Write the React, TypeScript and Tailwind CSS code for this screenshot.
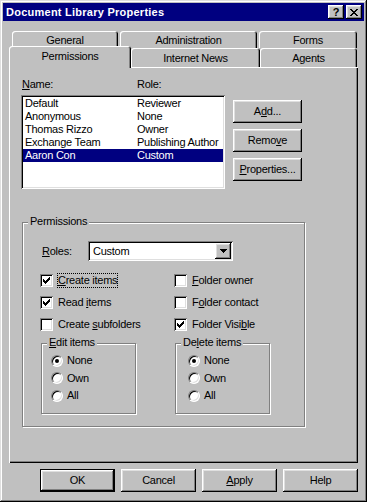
import React from "react";

function U({ children }: { children: React.ReactNode }) {
  return <span className="underline underline-offset-[1px]">{children}</span>;
}

function Btn({ children, className = "" }: { children: React.ReactNode; className?: string }) {
  return (
    <div
      className={`flex items-center justify-center bg-[#c0c0c0] shadow-[inset_-1px_-1px_#000,inset_1px_1px_#fff,inset_-2px_-2px_#808080,inset_2px_2px_#dfdfdf] ${className}`}
    >
      {children}
    </div>
  );
}

function Check({ checked }: { checked?: boolean }) {
  return (
    <span className="w-[13px] h-[13px] shrink-0 bg-white flex items-center justify-center shadow-[inset_1px_1px_#808080,inset_-1px_-1px_#fff,inset_2px_2px_#000,inset_-2px_-2px_#dfdfdf]">
      {checked && (
        <svg width="7" height="7" viewBox="0 0 7 7" shapeRendering="crispEdges">
          <rect x="0" y="2" width="1" height="3" fill="#000" />
          <rect x="1" y="3" width="1" height="3" fill="#000" />
          <rect x="2" y="4" width="1" height="3" fill="#000" />
          <rect x="3" y="3" width="1" height="3" fill="#000" />
          <rect x="4" y="2" width="1" height="3" fill="#000" />
          <rect x="5" y="1" width="1" height="3" fill="#000" />
          <rect x="6" y="0" width="1" height="3" fill="#000" />
        </svg>
      )}
    </span>
  );
}

function Radio({ on }: { on?: boolean }) {
  return (
    <span className="w-[12px] h-[12px] shrink-0 rounded-full bg-white flex items-center justify-center border border-t-[#808080] border-l-[#808080] border-b-white border-r-white shadow-[inset_1px_1px_#000,inset_-1px_-1px_#dfdfdf]">
      {on && <span className="w-[4px] h-[4px] rounded-full bg-black" />}
    </span>
  );
}

function CheckRow({
  checked,
  children,
  focus,
}: {
  checked?: boolean;
  children: React.ReactNode;
  focus?: boolean;
}) {
  return (
    <div className="flex items-center h-[13px]">
      <Check checked={checked} />
      <span
        className={`ml-[5px] whitespace-nowrap ${
          focus ? "outline outline-1 outline-dotted outline-black" : ""
        }`}
      >
        {children}
      </span>
    </div>
  );
}

function RadioGroup({
  label,
  pad,
  className = "",
}: {
  label: React.ReactNode;
  pad: string;
  className?: string;
}) {
  return (
    <div
      className={`relative w-[95px] h-[71px] border border-[#808080] shadow-[inset_1px_1px_#fff,1px_1px_#fff] ${className}`}
    >
      <span className="absolute -top-[8px] left-[5px] px-[2px] bg-[#c0c0c0] leading-[13px] whitespace-nowrap">
        {label}
      </span>
      <div className={`flex flex-col gap-[4.5px] mt-[10px] ${pad}`}>
        <div className="flex items-center h-[13px] gap-[4px]">
          <Radio on />
          <span>None</span>
        </div>
        <div className="flex items-center h-[13px] gap-[4px]">
          <Radio />
          <span>Own</span>
        </div>
        <div className="flex items-center h-[13px] gap-[4px]">
          <Radio />
          <span>All</span>
        </div>
      </div>
    </div>
  );
}

const users = [
  ["Default", "Reviewer"],
  ["Anonymous", "None"],
  ["Thomas Rizzo", "Owner"],
  ["Exchange Team", "Publishing Author"],
  ["Aaron Con", "Custom"],
];

export default function App() {
  return (
    <div className="w-[367px] h-[502px] bg-[#c0c0c0] p-[3px] flex flex-col font-['Liberation_Sans',Arial,sans-serif] text-[11px] leading-[13px] text-black tracking-[-0.25px] shadow-[inset_-1px_-1px_#000,inset_1px_1px_#dfdfdf,inset_-2px_-2px_#808080,inset_2px_2px_#fff] select-none">
      {/* Title bar */}
      <div className="h-[18px] shrink-0 bg-[#000080] flex items-center pl-[3px] pr-[2px]">
        <span className="flex-1 text-white font-bold tracking-[0.25px] whitespace-nowrap">
          Document Library Properties
        </span>
        <Btn className="w-[16px] h-[14px]">
          <span className="font-bold text-[11px] leading-none tracking-normal">?</span>
        </Btn>
        <Btn className="w-[16px] h-[14px] ml-[2px]">
          <svg width="8" height="7" viewBox="0 0 8 7" shapeRendering="crispEdges">
            <rect x="0" y="0" width="2" height="1" fill="#000" />
            <rect x="6" y="0" width="2" height="1" fill="#000" />
            <rect x="1" y="1" width="2" height="1" fill="#000" />
            <rect x="5" y="1" width="2" height="1" fill="#000" />
            <rect x="2" y="2" width="4" height="1" fill="#000" />
            <rect x="3" y="3" width="2" height="1" fill="#000" />
            <rect x="2" y="4" width="4" height="1" fill="#000" />
            <rect x="1" y="5" width="2" height="1" fill="#000" />
            <rect x="5" y="5" width="2" height="1" fill="#000" />
            <rect x="0" y="6" width="2" height="1" fill="#000" />
            <rect x="6" y="6" width="2" height="1" fill="#000" />
          </svg>
        </Btn>
      </div>

      {/* Tab row 1 */}
      <div className="flex mt-[10px] ml-[9px] gap-[2px] h-[17px] shrink-0">
        <div className="w-[106px] h-[17px] pt-[3px] text-center bg-[#c0c0c0] rounded-t-[3px] shadow-[inset_1px_1px_#fff,inset_-1px_0_#000,inset_-2px_0_#808080]">
          General
        </div>
        <div className="w-[137px] h-[17px] pt-[3px] text-center bg-[#c0c0c0] rounded-t-[3px] shadow-[inset_1px_1px_#fff,inset_-1px_0_#000,inset_-2px_0_#808080]">
          Administration
        </div>
        <div className="w-[98px] h-[17px] pt-[3px] text-center bg-[#c0c0c0] rounded-t-[3px] shadow-[inset_1px_1px_#fff,inset_-1px_0_#000,inset_-2px_0_#808080]">
          Forms
        </div>
      </div>

      {/* Tab row 2 */}
      <div className="flex -mt-[2px] ml-[6px] h-[21px] shrink-0 relative z-10">
        <div className="w-[122px] h-[22px] self-start pt-[4px] text-center bg-[#c0c0c0] rounded-t-[3px] shadow-[inset_1px_1px_#fff,inset_-1px_0_#000,inset_-2px_0_#808080]">
          Permissions
        </div>
        <div className="w-[129px] h-[19px] self-end pt-[4px] text-center bg-[#c0c0c0] rounded-t-[3px] shadow-[inset_1px_1px_#fff,inset_-1px_0_#000,inset_-2px_0_#808080]">
          Internet News
        </div>
        <div className="w-[97px] h-[19px] self-end pt-[4px] text-center bg-[#c0c0c0] rounded-t-[3px] shadow-[inset_1px_1px_#fff,inset_-1px_0_#000,inset_-2px_0_#808080]">
          Agents
        </div>
      </div>

      {/* Panel */}
      <div className="ml-[6px] w-[349px] h-[396px] shrink-0 bg-[#c0c0c0] shadow-[inset_1px_1px_#fff,inset_-1px_-1px_#000,inset_-2px_-2px_#808080] pt-[11px] pl-[12px]">
        <div className="flex h-[13px] pl-[1px]">
          <span className="w-[115px]">
            <U>N</U>ame:
          </span>
          <span>Role:</span>
        </div>

        <div className="flex mt-[4px]">
          <div className="w-[204px] h-[94px] bg-white p-[2px] shadow-[inset_1px_1px_#808080,inset_-1px_-1px_#fff,inset_2px_2px_#000,inset_-2px_-2px_#dfdfdf]">
            {users.map(([n, r], i) => (
              <div
                key={n}
                className={`flex h-[13px] whitespace-nowrap ${
                  i === 4 ? "bg-[#000080] text-white" : ""
                }`}
              >
                <span className="w-[114px] pl-[2px]">{n}</span>
                <span>{r}</span>
              </div>
            ))}
          </div>
          <div className="ml-[8px] mt-[5px] flex flex-col gap-[6px]">
            <Btn className="w-[69px] h-[23px]">
              A<U>d</U>d...
            </Btn>
            <Btn className="w-[69px] h-[23px]">
              Remo<U>v</U>e
            </Btn>
            <Btn className="w-[69px] h-[23px]">
              <U>P</U>roperties...
            </Btn>
          </div>
        </div>

        {/* Permissions group */}
        <div className="relative mt-[33px] ml-[1px] w-[283px] h-[205px] border border-[#808080] shadow-[inset_1px_1px_#fff,1px_1px_#fff]">
          <span className="absolute -top-[8px] left-[5px] px-[2px] bg-[#c0c0c0] leading-[13px]">
            Permissions
          </span>

          <div className="flex items-center mt-[18px] ml-[19px]">
            <span className="w-[46px]">
              <U>R</U>oles:
            </span>
            <div className="w-[145px] h-[20px] bg-white p-[2px] flex items-center shadow-[inset_1px_1px_#808080,inset_-1px_-1px_#fff,inset_2px_2px_#000,inset_-2px_-2px_#dfdfdf]">
              <span className="flex-1 pl-[3px]">Custom</span>
              <Btn className="w-[16px] h-[16px]">
                <svg width="7" height="4" viewBox="0 0 7 4" shapeRendering="crispEdges">
                  <rect x="0" y="0" width="7" height="1" fill="#000" />
                  <rect x="1" y="1" width="5" height="1" fill="#000" />
                  <rect x="2" y="2" width="3" height="1" fill="#000" />
                  <rect x="3" y="3" width="1" height="1" fill="#000" />
                </svg>
              </Btn>
            </div>
          </div>

          <div className="flex mt-[13px] ml-[17px]">
            <div className="w-[134px] flex flex-col gap-[9px]">
              <CheckRow checked focus>
                <U>C</U>reate items
              </CheckRow>
              <CheckRow checked>
                Read <U>i</U>tems
              </CheckRow>
              <CheckRow>
                Create <U>s</U>ubfolders
              </CheckRow>
            </div>
            <div className="flex flex-col gap-[9px]">
              <CheckRow>
                <U>F</U>older owner
              </CheckRow>
              <CheckRow>
                F<U>o</U>lder contact
              </CheckRow>
              <CheckRow checked>
                Folder Visi<U>b</U>le
              </CheckRow>
            </div>
          </div>

          <div className="flex mt-[12px] ml-[18px] gap-[39px]">
            <RadioGroup
              label={
                <>
                  <U>E</U>dit items
                </>
              }
              pad="pl-[9px]"
            />
            <RadioGroup
              label={
                <>
                  De<U>l</U>ete items
                </>
              }
              pad="pl-[12px]"
            />
          </div>
        </div>
      </div>

      {/* Bottom buttons */}
      <div className="flex gap-[6px] mt-[6px] ml-[37px]">
        <div className="w-[75px] h-[23px] flex items-center justify-center bg-[#c0c0c0] shadow-[inset_0_0_0_1px_#000,inset_-2px_-2px_#000,inset_2px_2px_#fff,inset_-3px_-3px_#808080,inset_3px_3px_#dfdfdf]">
          OK
        </div>
        <Btn className="w-[75px] h-[23px]">Cancel</Btn>
        <Btn className="w-[75px] h-[23px]">
          <U>A</U>pply
        </Btn>
        <Btn className="w-[75px] h-[23px]">Help</Btn>
      </div>
    </div>
  );
}
